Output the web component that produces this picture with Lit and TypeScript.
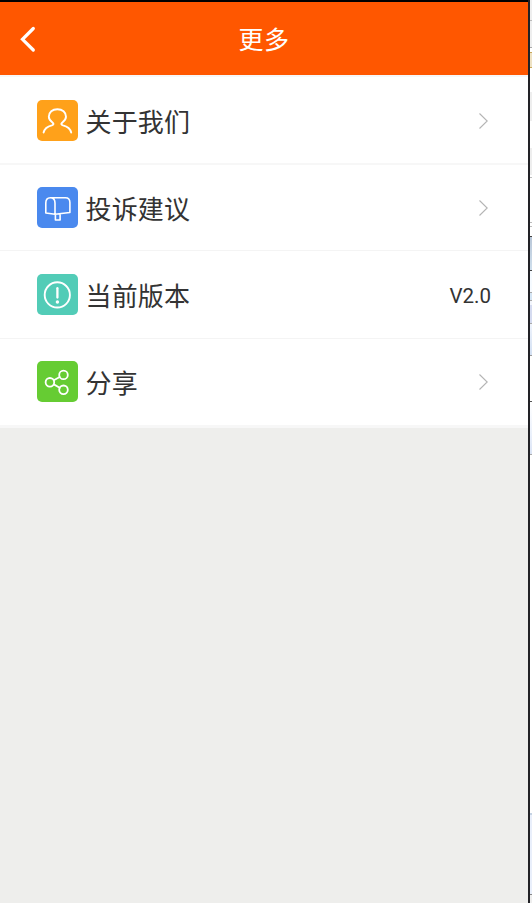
import { LitElement, html, css, svg } from "lit";
import { customElement } from "lit/decorators.js";

const icons = {
  user: svg`<path d="M6.600 32.500C7.500 28.500 11 26.200 14.800 25.300Q17.600 24.500 15.700 22.700C12.800 20.600 11.800 18.800 11.800 16.800C11.800 12.300 15.400 9.200 20.400 9.200S29 12.300 29 16.800C29 18.800 28 20.600 25.100 22.700Q23.200 24.500 26 25.300C29.800 26.200 33.300 28.500 34.200 32.500" stroke-width="1.900"/>`,
  mailbox: svg`<path d="M8.800 26V16C8.800 12.500 10.500 10.700 13.300 10.700S18 12.500 18 16V27.300ZM13.300 10.700H28.500Q32.900 10.700 32.900 15.500V25.500L18 27.300M18.400 27.300V33H23.100V26.800" stroke-width="1.600"/>`,
  notice: svg`<circle cx="20.300" cy="20.900" r="12.600" stroke-width="1.900"/><path d="M20.400 14.200V23.500" stroke-width="2.300"/><circle cx="20.400" cy="28" r="1.700" fill="#fff" stroke="none"/>`,
  share: svg`<circle cx="12.900" cy="21.300" r="4.300"/><circle cx="26.500" cy="13.900" r="4.300"/><circle cx="26.500" cy="28.800" r="4.300"/><path d="M16.800 19.300L22.700 16M16.800 23.400L22.700 26.700"/>`,
};

const rows = [
  { label: "关于我们", tone: "orange", icon: icons.user, value: "" },
  { label: "投诉建议", tone: "blue", icon: icons.mailbox, value: "" },
  { label: "当前版本", tone: "teal", icon: icons.notice, value: "V2.0" },
  { label: "分享", tone: "green", icon: icons.share, value: "" },
];

@customElement("app-root")
export class AppRoot extends LitElement {
  static styles = css`
    :host { display: flex; width: 532px; height: 903px; overflow: hidden; font-family: Roboto, "Noto Sans CJK SC", sans-serif; color: #333; }
    * { box-sizing: border-box; }
    .screen { width: 528px; height: 903px; background: #eeeeec; border-top: 2px solid #000; }
    .bar { height: 73px; background: #ff5700; display: grid; grid-template-columns: 80px 1fr 80px; align-items: center; }
    .back { width: 18px; height: 28px; margin-left: 19px; display: block; }
    .title { color: #fff; text-align: center; font-size: 25px; line-height: 36px; letter-spacing: .5px; padding-top: 4px; }
    .list { background: #fff; border-top: 2px solid #f7f7f7; border-bottom: 3px solid #f7f7f7; height: 353px; display: grid; grid-template-rows: 88px 86px 88px 86px; }
    .row { display: flex; align-items: center; padding: 0 37px; border-bottom: 1px solid #f4f4f4; }
    .row:first-child { border-bottom: 2px solid #f7f7f7; padding-top: 1px; }
    .row:last-child { border-bottom: 0; padding-bottom: 1px; }
    .icon { width: 41px; height: 41px; border-radius: 5px; flex: none; }
    .orange { background: #ffa11a; }
    .blue { background: #4a89ee; }
    .teal { background: #52ccb7; }
    .green { background: #66cc33; }
    .label { flex: 1; margin-left: 7.500px; padding-top: 4px; font-size: 26px; line-height: 38px; letter-spacing: .15px; }
    .value { font-size: 20.500px; padding-top: 3px; }
    .chevron { width: 12px; height: 18px; margin-right: 2px; }
    .edge { width: 2px; background: #222226; }
    .behind { width: 2px; background: linear-gradient(#eee 0 20px, #bbb 20px 21px, #eee 21px 47px, #aaa 47px 48px, #fff 48px 52px, #c9a85a 52px 53px, #eee2c4 53px 67px, #c9a85a 67px 68px, #fff 68px 92px, #eee 92px 121px, #fff 121px 148px, #eee 148px 175px, #fff 175px 177px, #bbb 177px 178px, #fff 178px 222px, #bbb 222px 223px, #fff 223px 226px, #bbb 226px 227px, #fff 227px 236px, #444 236px 237px, #b9c7d8 237px, #cfdfed 270px, #444 270px 271px, #f5faff 271px 292px, #aaa 292px 293px, #d5e5f4 293px 300px, #aaa 300px 301px, #f2f5fc 301px 305px, #d5dbf0 305px 323px, #aaa 323px 324px, #eef3fc 324px, #d3e0f3 355px, #999 355px 356px, #fff 356px 401px, #555 401px 402px, #fff 402px, #eaf0fb 435px, #dbe4f5 454px, #aaa 454px 455px, #fff 455px 813px, #c5d3e4 813px 815px, #e9effb 815px 894px, #888 894px 895px, #eee 895px); }
  `;

  render() {
    return html`
      <main class="screen">
        <header class="bar">
          <svg class="back" viewBox="0 0 18 28" fill="none" stroke="#fff" stroke-width="3.200" stroke-linecap="round"><path d="M14.300 3.500L3.500 14.300L14.300 25"/></svg>
          <div class="title">更多</div>
        </header>
        <section class="list">
          ${rows.map((r) => html`
            <div class="row">
              <svg class="icon ${r.tone}" viewBox="0 0 41 41" fill="none" stroke="#fff" stroke-width="1.800" stroke-linejoin="round" stroke-linecap="round">${r.icon}</svg>
              <span class="label">${r.label}</span>
              ${r.value
                ? html`<span class="value">${r.value}</span>`
                : html`<svg class="chevron" viewBox="0 0 12 18" fill="none" stroke="#b4b4b4" stroke-width="1.100"><path d="M2.500 1.500L10.200 9L2.500 16.500"/></svg>`}
            </div>`)}
        </section>
      </main>
      <div class="edge"></div>
      <div class="behind"></div>
    `;
  }
}
